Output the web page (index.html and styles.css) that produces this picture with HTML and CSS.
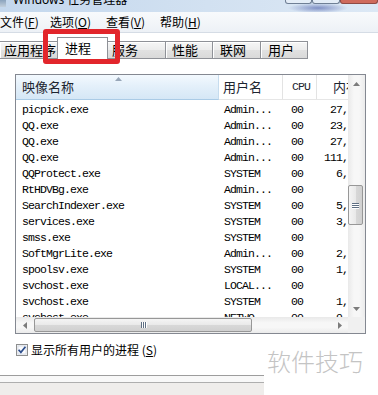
FILE: index.html
```html
<!DOCTYPE html>
<html lang="zh-CN">
<head>
  <meta charset="UTF-8" />
  <meta name="viewport" content="width=device-width, initial-scale=1.0"/>
  <title>Windows 任务管理器</title>
  <link rel="stylesheet" href="styles.css">
</head>
<body>
  <div class="window">
    <div class="titlebar">
      <span class="app-icon"></span>
      <span class="title">Windows 任务管理器</span>
      <div class="caption">
        <span class="cap-btn min"></span>
        <span class="cap-btn max"></span>
        <span class="cap-btn close"></span>
      </div>
    </div>

    <div class="menubar">
      <span class="menu m-file">文件(<u>F</u>)</span>
      <span class="menu m-opt">选项(<u>O</u>)</span>
      <span class="menu m-view">查看(<u>V</u>)</span>
      <span class="menu">帮助(<u>H</u>)</span>
    </div>

    <div class="tabs">
      <div class="tab t-apps">应用程序</div>
      <div class="tab active">进程</div>
      <div class="tab t-svc">服务</div>
      <div class="tab t-perf">性能</div>
      <div class="tab t-net">联网</div>
      <div class="tab t-users">用户</div>
    </div>

    <div class="panel">
      <div class="listview">
        <div class="lv-top">
          <div class="lv-main">
            <div class="lv-head">
              <div class="hcol c-name sorted">映像名称
                <svg class="sort-arrow" width="7" height="4" viewBox="0 0 7 4"><polygon points="0,4 3.5,0 7,4" fill="#97a6b8"/></svg>
              </div>
              <div class="hcol c-user">用户名</div>
              <div class="hcol c-cpu mono">CPU</div>
              <div class="hcol c-mem">内存(专用工作集)</div>
            </div>
            <div class="lv-rows">
              <div class="row"><span class="c-name">picpick.exe</span><span class="c-user">Admin...</span><span class="c-cpu">00</span><span class="c-mem">27,812 K</span></div>
              <div class="row"><span class="c-name">QQ.exe</span><span class="c-user">Admin...</span><span class="c-cpu">00</span><span class="c-mem">23,460 K</span></div>
              <div class="row"><span class="c-name">QQ.exe</span><span class="c-user">Admin...</span><span class="c-cpu">00</span><span class="c-mem">27,120 K</span></div>
              <div class="row"><span class="c-name">QQ.exe</span><span class="c-user">Admin...</span><span class="c-cpu">00</span><span class="c-mem">111,348 K</span></div>
              <div class="row"><span class="c-name">QQProtect.exe</span><span class="c-user">SYSTEM</span><span class="c-cpu">00</span><span class="c-mem">6,472 K</span></div>
              <div class="row"><span class="c-name">RtHDVBg.exe</span><span class="c-user">Admin...</span><span class="c-cpu">00</span><span class="c-mem">904 K</span></div>
              <div class="row"><span class="c-name">SearchIndexer.exe</span><span class="c-user">SYSTEM</span><span class="c-cpu">00</span><span class="c-mem">5,940 K</span></div>
              <div class="row"><span class="c-name">services.exe</span><span class="c-user">SYSTEM</span><span class="c-cpu">00</span><span class="c-mem">3,216 K</span></div>
              <div class="row"><span class="c-name">smss.exe</span><span class="c-user">SYSTEM</span><span class="c-cpu">00</span><span class="c-mem">284 K</span></div>
              <div class="row"><span class="c-name">SoftMgrLite.exe</span><span class="c-user">Admin...</span><span class="c-cpu">00</span><span class="c-mem">2,688 K</span></div>
              <div class="row"><span class="c-name">spoolsv.exe</span><span class="c-user">SYSTEM</span><span class="c-cpu">00</span><span class="c-mem">1,904 K</span></div>
              <div class="row"><span class="c-name">svchost.exe</span><span class="c-user">LOCAL...</span><span class="c-cpu">00</span><span class="c-mem">736 K</span></div>
              <div class="row"><span class="c-name">svchost.exe</span><span class="c-user">SYSTEM</span><span class="c-cpu">00</span><span class="c-mem">1,532 K</span></div>
              <div class="row"><span class="c-name">svchost.exe</span><span class="c-user">NETWO...</span><span class="c-cpu">00</span><span class="c-mem">9,080 K</span></div>
            </div>
          </div>

          <div class="vscroll">
            <div class="sb-btn">
              <svg width="7" height="4" viewBox="0 0 7 4"><polygon points="0,4 3.5,0 7,4" fill="#7c7c7c"/></svg>
            </div>
            <div class="vthumb">
              <span class="grip-h"></span><span class="grip-h"></span><span class="grip-h"></span>
            </div>
            <div class="sb-btn sb-end">
              <svg width="7" height="4" viewBox="0 0 7 4"><polygon points="0,0 7,0 3.5,4" fill="#7c7c7c"/></svg>
            </div>
          </div>
        </div>

        <div class="lv-bottom">
          <div class="hscroll">
            <div class="sb-btn">
              <svg width="4" height="7" viewBox="0 0 4 7"><polygon points="4,0 4,7 0,3.5" fill="#7c7c7c"/></svg>
            </div>
            <div class="hthumb">
              <span class="grip-v"></span><span class="grip-v"></span><span class="grip-v"></span>
            </div>
            <div class="sb-btn sb-end">
              <svg width="4" height="7" viewBox="0 0 4 7"><polygon points="0,0 4,3.5 0,7" fill="#7c7c7c"/></svg>
            </div>
          </div>
          <div class="corner"></div>
        </div>
      </div>

      <label class="showall">
        <svg class="checkbox" width="12" height="12" viewBox="0 0 12 12">
          <rect x="0.5" y="0.5" width="11" height="11" fill="#f2f4f7" stroke="#8e8f8f"/>
          <rect x="2" y="2" width="8" height="8" fill="#fbfcfe" stroke="#c5ced9" stroke-width="0.6"/>
          <path d="M2.6 5.8 L4.9 8.4 L9.4 2.8" fill="none" stroke="#2c4d8c" stroke-width="1.7"/>
        </svg>
        <span>显示所有用户的进程 (<u>S</u>)</span>
      </label>
    </div>

    <div class="statusbar">
      <div class="status-inner"></div>
    </div>

    <div class="highlight"></div>
    <div class="watermark">软件技巧</div>
  </div>
</body>
</html>
```

FILE: styles.css
```css
* {
  box-sizing: border-box;
}

body {
  margin: 0;
  width: 378px;
  height: 395px;
  overflow: hidden;
  background: #fff;
  color: #000;
  font-family: "Noto Sans CJK SC", "Noto Sans", sans-serif;
  font-size: 12px;
}

.window {
  position: relative;
  height: 395px;
  display: flex;
  flex-direction: column;
}

/* title bar, only its lower edge is in view */
.titlebar {
  flex: none;
  height: 12px;
  display: flex;
  align-items: flex-start;
  overflow: hidden;
  background:
    radial-gradient(30px 5px at 318px 8px, rgba(40, 60, 150, 0.5), transparent),
    linear-gradient(to right, #c3d7ed, #d2e1f1 55%, #dce8f5);
}

.app-icon {
  width: 6px;
  height: 7px;
  margin-right: 7px;
  background: linear-gradient(#8aa3bd, #c2cfdc);
}

.title {
  margin-top: -7px;
  line-height: 14px;
  white-space: nowrap;
  font-family: "Noto Sans", "Noto Sans CJK SC", sans-serif;
}

.caption {
  margin-left: auto;
  display: flex;
}

.cap-btn {
  height: 4px;
  border: 1px solid #6f7f95;
  border-top: none;
  border-radius: 0 0 3px 3px;
  background: #e4edf7;
}

.cap-btn.min { width: 27px; }
.cap-btn.max { width: 28px; }
.cap-btn.close {
  width: 38px;
  background: #cf6a5c;
  border-color: #8e4a44;
}

/* menu */
.menubar {
  flex: none;
  height: 21px;
  display: flex;
  align-items: center;
  line-height: 20px;
  background: linear-gradient(#f8fafc, #edf1f6);
  border-bottom: 1px solid #d5dce5;
}

.menu { white-space: nowrap; }
.m-file { width: 50px; }
.m-opt { width: 56px; }
.m-view { width: 54px; }

/* tabs */
.tabs {
  flex: none;
  height: 26px;
  display: flex;
  align-items: flex-end;
}

.tab {
  flex: none;
  height: 18px;
  padding-left: 6px;
  font-size: 13px;
  line-height: 16px;
  white-space: nowrap;
  overflow: hidden;
  border-top: 1px solid #8f9197;
  border-right: 1px solid #8f9197;
  border-bottom: 1px solid #8f9197;
  box-shadow: inset 1px 1px 0 #fff;
  background: linear-gradient(#f6f6f6, #ececec 50%, #e1e1e1 51%, #d9d9d9);
}

.t-apps { width: 59px; padding-left: 4px; }
.t-svc { width: 60px; }
.t-perf { width: 47px; }
.t-net { width: 48px; padding-left: 7px; }
.t-users { width: 47px; padding-left: 7px; }

.tab.active {
  width: 51px;
  height: 22px;
  margin: 0 -2px;
  padding: 2px 0 0 7px;
  z-index: 1;
  background: #fff;
  border-left: 1px solid #8f9197;
  border-bottom: none;
  box-shadow: none;
}

/* process list */
.panel {
  flex: 1;
  display: flex;
  flex-direction: column;
  background: #fff;
}

.listview {
  width: 351px;
  height: 260px;
  margin: 15px 0 0 15px;
  border: 1px solid #848891;
  display: flex;
  flex-direction: column;
}

.lv-top {
  height: 242px;
  display: flex;
}

.lv-main {
  width: 332px;
  overflow: hidden;
}

.lv-head {
  height: 25px;
  display: flex;
  color: #1d2530;
}

.hcol {
  flex: none;
  position: relative;
  height: 25px;
  line-height: 24px;
  font-size: 13px;
  white-space: nowrap;
  border-right: 1px solid #e3e3e3;
  border-bottom: 1px solid #e6e6e6;
}

.hcol.sorted {
  background: linear-gradient(#f3f9fe, #e4f0fa 45%, #d5e7f6);
  border-right-color: #c6dcee;
  border-bottom-color: #aacbe6;
}

.sort-arrow {
  position: absolute;
  left: 99px;
  top: 2px;
}

.mono {
  font-family: "Liberation Mono", monospace;
  font-size: 11.5px;
  letter-spacing: -0.9px;
}

.lv-head .c-name { padding-left: 6px; }
.lv-head .c-user { padding-left: 4px; }
.lv-head .c-cpu { padding-left: 9px; }
.lv-head .c-mem { padding-left: 16px; border-right: none; }

.c-name { width: 203px; }
.c-user { width: 64px; }
.c-cpu { width: 34px; }
.c-mem { width: 67px; }

.lv-rows {
  height: 217px;
  padding-top: 2px;
  overflow: hidden;
}

.row {
  display: flex;
  height: 16px;
  line-height: 16px;
  font-family: "Liberation Mono", monospace;
  font-size: 11.5px;
  letter-spacing: -0.9px;
  white-space: nowrap;
}

.row span { flex: none; }
.row .c-name { padding-left: 6px; }
.row .c-user { padding-left: 5px; }
.row .c-cpu { padding-left: 8px; }
.row .c-mem { text-align: right; padding-right: 6px; }

/* scrollbars */
.vscroll {
  width: 17px;
  display: flex;
  flex-direction: column;
  background: linear-gradient(to right, #e9e9e9, #f7f7f7 35%, #f7f7f7 65%, #ebebeb);
}

.sb-btn {
  flex: none;
  width: 17px;
  height: 17px;
  display: flex;
  align-items: center;
  justify-content: center;
}

.sb-end { margin-top: auto; }

.vthumb {
  width: 15px;
  height: 40px;
  margin: 93px 0 0 0;
  border: 1px solid #979797;
  border-radius: 2px;
  background: linear-gradient(to right, #f4f4f4, #e9e9e9 50%, #d8d8d8 51%, #d0d0d0);
  display: flex;
  flex-direction: column;
  align-items: center;
  justify-content: center;
  gap: 1px;
}

.grip-h {
  width: 7px;
  height: 1px;
  background: #5f6f82;
  box-shadow: 0 1px 0 #fff;
}

.lv-bottom {
  height: 16px;
  display: flex;
}

.hscroll {
  width: 332px;
  height: 16px;
  display: flex;
  background: linear-gradient(#e9e9e9, #f7f7f7 35%, #f7f7f7 65%, #ebebeb);
}

.hscroll .sb-btn { height: 16px; }
.hscroll .sb-end { margin-top: 0; margin-left: auto; }

.hthumb {
  width: 218px;
  height: 14px;
  margin: 1px 0 0 1px;
  border: 1px solid #979797;
  border-radius: 2px;
  background: linear-gradient(#f4f4f4, #e9e9e9 50%, #d8d8d8 51%, #d0d0d0);
  display: flex;
  align-items: center;
  justify-content: center;
  gap: 1px;
}

.grip-v {
  width: 1px;
  height: 6px;
  background: #5f6f82;
  box-shadow: 1px 0 0 #fff;
}

.corner {
  width: 17px;
  height: 16px;
  background: #f0f0f0;
}

/* checkbox */
.showall {
  display: flex;
  align-items: center;
  gap: 3px;
  height: 12px;
  margin: 10px 0 0 16px;
  line-height: 12px;
  font-size: 12px;
  white-space: nowrap;
}

.checkbox { flex: none; }

/* status bar */
.statusbar {
  flex: none;
  height: 20px;
  border-top: 1px solid #9d9d9d;
  background: #f8f8f8;
}

.status-inner {
  height: 13px;
  margin-top: 6px;
  border-top: 1px solid #aeaeae;
  background: #efedeb;
}

/* red box drawn over the active tab */
.highlight {
  position: absolute;
  left: 43px;
  top: 29px;
  width: 77px;
  height: 35px;
  border: 5px solid #e2252b;
  border-radius: 3px;
}

.watermark {
  position: absolute;
  left: 264px;
  top: 337px;
  right: 0;
  bottom: 0;
  padding: 12px 0 0 3px;
  background: #fff;
  color: #c4c4c4;
  font-size: 24px;
  font-weight: 300;
  line-height: 24px;
  white-space: nowrap;
}
```
